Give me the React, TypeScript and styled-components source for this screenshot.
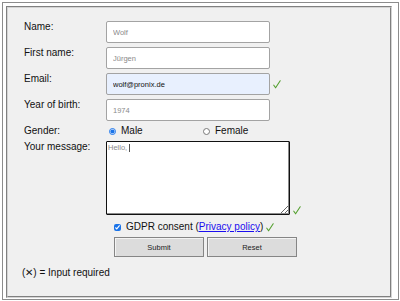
import React from "react";
import styled, { createGlobalStyle } from "styled-components";

const Global = createGlobalStyle`
  html, body { margin: 0; padding: 0; background: #ffffff; }
  body { font-family: "Liberation Sans", Arial, sans-serif; color: #111; }
  * { box-sizing: border-box; }
`;

const Frame = styled.div`
  margin: 2px;
  width: 397px;
  height: 298px;
  border: 1px solid #8c8c8c;
  padding: 3px 6px 1px 3px;
  background: #fff;
`;

const Box = styled.form`
  width: 386px;
  height: 292px;
  margin: 0;
  border: 2px groove #d4d4d4;
  background: #f0f0f0;
  padding: 13px 0 0 16px;
  display: flex;
  flex-direction: column;
`;

const Grid = styled.div`
  display: grid;
  grid-template-columns: 82px 1fr;
  row-gap: 4px;
  font-size: 10px;
  line-height: 12px;
`;

const Label = styled.label`
  align-self: start;
  font-size: 10px;
  line-height: 12px;
  color: #111;
`;

const Cell = styled.div<{ $align?: string; $indent?: number }>`
  display: flex;
  align-items: ${(p) => p.$align || "center"};
  padding-left: ${(p) => p.$indent || 0}px;
  min-height: 12px;
`;

const TextInput = styled.input<{ $filled?: boolean }>`
  width: 164px;
  height: 22px;
  margin: 0;
  border: 1px solid #a3a3a3;
  border-radius: 2px;
  padding: 0 4px 0 6px;
  font-family: "Liberation Sans", Arial, sans-serif;
  font-size: 7.5px;
  color: #111;
  background: ${(p) => (p.$filled ? "#e8f0fe" : "#ffffff")};
  outline: none;
  &::placeholder { color: #8a8a8a; }
`;

const Check = styled.svg`
  flex: none;
  margin-left: 3px;
`;

const OkMark = () => (
  <Check width="8" height="9" viewBox="0 0 8 9">
    <path d="M0.8 5.2 L2.6 7.8 L7.2 0.8" fill="none" stroke="#54a02f" strokeWidth="1.1" strokeLinecap="round" strokeLinejoin="round" />
  </Check>
);

const Option = styled.label<{ $width?: number }>`
  display: flex;
  align-items: center;
  width: ${(p) => (p.$width ? `${p.$width}px` : "auto")};
  font-size: 10px;
  line-height: 12px;
  color: #111;
`;

const Radio = styled.input`
  width: 7px;
  height: 7px;
  margin: 0 5px 0 3px;
  accent-color: #1a73e8;
`;

const Box2 = styled.input`
  width: 7px;
  height: 7px;
  margin: 0 5px 0 0;
  accent-color: #1a73e8;
`;

const AreaWrap = styled.div`
  position: relative;
  width: 184px;
  height: 74px;
`;

const Area = styled.textarea`
  width: 184px;
  height: 74px;
  margin: 0;
  border: 1px solid #111;
  box-shadow: inset -1px -1px 0 #8a8a8a;
  border-radius: 1px;
  padding: 1px 1px;
  font-family: "Liberation Sans", Arial, sans-serif;
  font-size: 7.5px;
  line-height: 9px;
  outline: none;
  display: block;
  &::placeholder { color: #8a8a8a; }
`;

const Caret = styled.span`
  position: absolute;
  left: 23px;
  top: 3px;
  width: 1px;
  height: 8px;
  background: #555;
`;

const Consent = styled.div`
  display: flex;
  align-items: center;
  font-size: 10px;
  line-height: 12px;
  color: #111;
  padding-left: 8px;
  margin-top: 2px;
`;

const Link = styled.a`
  color: #1a0dee;
  text-decoration: underline;
`;

const Buttons = styled.div`
  display: flex;
  gap: 3px;
  padding-left: 8px;
  margin-top: 0px;
`;

const Button = styled.button`
  width: 90px;
  height: 20px;
  margin: 0;
  padding: 0;
  border: 1px solid #858585;
  box-shadow: inset 1px 1px 0 #f4f4f4;
  background: #dcdcdc;
  font-family: "Liberation Sans", Arial, sans-serif;
  font-size: 7.5px;
  color: #222;
`;

const Note = styled.p`
  margin: 10px 0 0 -2px;
  font-size: 10px;
  line-height: 12px;
  color: #111;
`;

export default function App() {
  return (
    <>
      <Global />
      <Frame>
        <Box onSubmit={(e) => e.preventDefault()}>
          <Grid>
            <Label>Name:</Label>
            <Cell>
              <TextInput placeholder="Wolf" />
            </Cell>
            <Label>First name:</Label>
            <Cell>
              <TextInput placeholder="Jürgen" />
            </Cell>
            <Label>Email:</Label>
            <Cell>
              <TextInput $filled defaultValue="wolf@pronix.de" />
              <OkMark />
            </Cell>
            <Label>Year of birth:</Label>
            <Cell>
              <TextInput placeholder="1974" />
            </Cell>
            <Label>Gender:</Label>
            <Cell>
              <Option $width={97}>
                <Radio type="radio" name="g" defaultChecked />
                Male
              </Option>
              <Option>
                <Radio type="radio" name="g" style={{ marginLeft: 0 }} />
                Female
              </Option>
            </Cell>
            <Label>Your message:</Label>
            <Cell $align="flex-end">
              <AreaWrap>
                <Area placeholder="Hello," />
                <Caret />
              </AreaWrap>
              <OkMark />
            </Cell>
            <span />
            <Consent>
              <Box2 type="checkbox" defaultChecked />
              GDPR consent (<Link href="#">Privacy policy</Link>)
              <OkMark />
            </Consent>
            <span />
            <Buttons>
              <Button type="submit">Submit</Button>
              <Button type="reset">Reset</Button>
            </Buttons>
          </Grid>
          <Note>(✕) = Input required</Note>
        </Box>
      </Frame>
    </>
  );
}
